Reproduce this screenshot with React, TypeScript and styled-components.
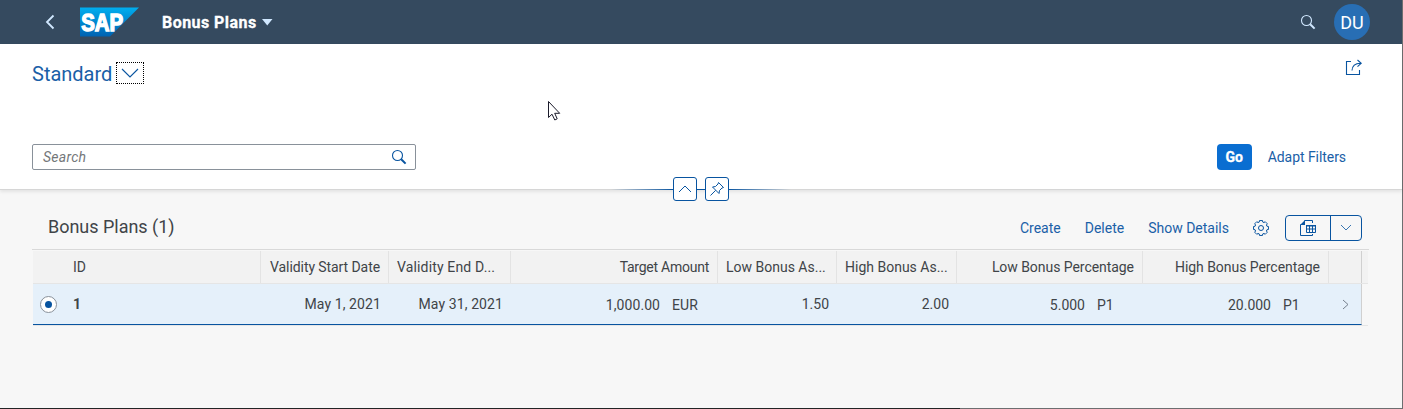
import React from 'react';
import styled, { createGlobalStyle } from 'styled-components';

const Global = createGlobalStyle`
  * { box-sizing: border-box; }
  body { margin: 0; overflow: hidden; background: #f7f7f7; font-family: Roboto, "Liberation Sans", sans-serif; font-size: 14px; color: #404448; }
  svg { display: block; flex: none; }
`;
const Page = styled.div`
  width: 1403px; height: 409px; display: flex; flex-direction: column;
  background: #f7f7f7; border-right: 1px solid #6d6e70;
`;
const Shell = styled.header`
  height: 44px; flex: none; display: flex; align-items: center; background: #354a5f; color: #fff;
  padding: 0 32px 0 44px;
`;
const Back = styled.div`width: 36px;`;
const ShellTitle = styled.div`
  margin-left: 22px; font-weight: 700; font-size: 16px; letter-spacing: 0.45px; white-space: nowrap;
  -webkit-text-stroke: 0.3px #fff;
`;
const TitleArrow = styled.svg`margin-left: 5px;`;
const Spacer = styled.div`flex: 1;`;
const Avatar = styled.div`
  width: 36px; height: 36px; margin-left: 18px; border-radius: 50%; background: #286eb4;
  display: flex; align-items: center; justify-content: center; font-size: 18px;
`;
const FilterHeader = styled.section`
  height: 146px; flex: none; background: #fff; border-bottom: 1px solid #d6d6d6;
  box-shadow: 0 2px 3px rgba(0,0,0,0.08); display: flex; flex-direction: column; position: relative;
`;
const VariantRow = styled.div`
  height: 100px; padding: 14px 39px 0 32px; display: flex; align-items: flex-start; justify-content: space-between;
`;
const Variant = styled.div`
  display: flex; align-items: center; color: #1a60a7; font-size: 20px; line-height: 32px;
`;
const VariantButton = styled.div`
  width: 28px; height: 22px; margin: 0 0 2px 4px; border: 1px dotted #000;
  display: flex; align-items: center; justify-content: center;
`;
const Share = styled.div`padding-top: 1px;`;
const FilterRow = styled.div`height: 26px; display: flex; align-items: center; padding: 0 56px 0 32px;`;
const SearchField = styled.div`
  width: 384px; height: 26px; border: 1px solid #89919a; border-radius: 2px; padding: 0 8px 0 10px;
  display: flex; align-items: center; justify-content: space-between;
  font-style: italic; color: #74777a; letter-spacing: 0.25px;
`;
const GoButton = styled.div`
  width: 35px; height: 26px; border-radius: 4px; background: #0a6ed1; color: #fff; font-weight: 700;
  display: flex; align-items: center; justify-content: center; -webkit-text-stroke: 0.3px #fff;
`;
const Link = styled.div<{ $space?: number; $gap?: number }>`
  color: #1a60a7; white-space: nowrap; letter-spacing: ${p => p.$space ?? 0}px; margin-left: ${p => p.$gap ?? 0}px;
`;
const Pins = styled.div`
  position: absolute; left: 611px; bottom: -13px; width: 180px; height: 26px;
  display: flex; align-items: center; justify-content: center; gap: 8px;
  background: linear-gradient(90deg, rgba(8,84,160,0), #0854a0 35%, #0854a0 65%, rgba(8,84,160,0)) 0 13px / 100% 1px no-repeat;
`;
const PinButton = styled.div`
  width: 24px; height: 24px; border: 1px solid #0854a0; border-radius: 3px; background: #fff;
  display: flex; align-items: center; justify-content: center;
`;
const Cursor = styled.svg`position: absolute; left: 547px; top: 56px;`;
const Toolbar = styled.div`
  height: 59px; padding: 16px 40px 0 48px; display: flex; align-items: center; flex: none;
`;
const Heading = styled.div`font-size: 18px; letter-spacing: -0.02px; padding-bottom: 3px;`;
const Settings = styled.div`margin-left: 24px;`;
const Split = styled.div`
  width: 77px; height: 26px; margin-left: 16px; border: 1px solid #0854a0; border-radius: 4px;
  display: grid; grid-template-columns: 44px 1fr;
`;
const SplitPart = styled.div<{ $line?: boolean }>`
  display: flex; align-items: center; justify-content: center; border-left: ${p => (p.$line ? '1px solid #0854a0' : '0')};
`;
const Table = styled.div`margin: 0 33px 0 32px; border-top: 1px solid #d9d9d9; padding: 1px 1px 0 1px;`;
const columns = '228px 128px 122px 207px 119px 120px 186px 186px 33px 7px';
const HeadRow = styled.div`
  display: grid; grid-template-columns: ${columns}; height: 33px; background: #f2f2f2; border-bottom: 1px solid #e5e5e5;
`;
const HeadCell = styled.div<{ $align?: string; $space?: number; $last?: boolean }>`
  display: flex; align-items: center; padding: 0 8px; white-space: nowrap; overflow: hidden;
  justify-content: ${p => p.$align ?? 'flex-end'}; letter-spacing: ${p => p.$space ?? 0}px;
  border-right: 1px solid ${p => (p.$last ? '#d0d0d0' : '#e3e3e3')};
`;
const IdHead = styled(HeadCell)`padding-left: 40px;`;
const BodyRow = styled.div`
  display: grid; grid-template-columns: ${columns}; height: 42px; border-bottom: 1px solid #e5e5e5;
`;
const Cell = styled.div<{ $space?: number; $align?: string }>`
  background: #e5f0fa; border-bottom: 1px solid #0854a0; padding: 0 8px 0 0; white-space: nowrap;
  display: flex; align-items: center; justify-content: ${p => p.$align ?? 'flex-end'};
  letter-spacing: ${p => p.$space ?? 0}px;
`;
const AmountCell = styled(Cell)`padding: 2px 8px 0 0;`;
const IdCell = styled(Cell)`font-weight: 700; padding-left: 7px;`;
const EndCell = styled(Cell)`padding: 0; border-right: 1px solid #d0d0d0;`;
const Radio = styled.div`
  width: 17px; height: 17px; border: 1px solid #89919a; border-radius: 50%; background: #fff; margin-right: 16px;
  display: flex; align-items: center; justify-content: center;
  &::after { content: ''; width: 7px; height: 7px; border-radius: 50%; background: #0854a0; }
`;
const Unit = styled.span`width: 38px; margin-left: 12px;`;
const BottomEdge = styled.div`
  height: 1px; flex: none; background: linear-gradient(90deg, #222426 960px, #6d6e70 960px);
`;

const Magnifier = ({ color }: { color: string }) => (
  <svg width="16" height="16" viewBox="0 0 16 16" fill="none" stroke={color}>
    <circle cx="6.5" cy="6.5" r="5" strokeWidth="1.1" />
    <path d="M10.2 10.2 14.6 14.6" strokeWidth="2" />
  </svg>
);
const Gear = () => {
  const pts: string[] = [];
  for (let i = 0; i < 8; i++) {
    [[-0.28, 6.2], [-0.2, 7.6], [0.2, 7.6], [0.28, 6.2]].forEach(([d, r]) => {
      const a = (i * Math.PI) / 4 + d;
      pts.push(`${(8 + r * Math.sin(a)).toFixed(2)},${(8 - r * Math.cos(a)).toFixed(2)}`);
    });
  }
  return (
    <svg width="16" height="16" viewBox="0 0 16 16" fill="none" stroke="#0854a0" overflow="visible">
      <polygon points={pts.join(' ')} strokeLinejoin="round" />
      <circle cx="8" cy="8" r="2.5" />
    </svg>
  );
};
const Logo = () => (
  <svg width="60" height="30" viewBox="0 0 60 30">
    <defs>
      <linearGradient id="logo" x1="0" y1="0" x2="0" y2="1">
        <stop offset="0" stopColor="#00aeef" /><stop offset="1" stopColor="#0062b1" />
      </linearGradient>
    </defs>
    <path d="M0 .5H59L30 29.5H0Z" fill="url(#logo)" />
    <text x="1.2" y="23.5" fontFamily="Liberation Sans, sans-serif" fontWeight="700" fontSize="23" textLength="42" lengthAdjust="spacingAndGlyphs" fill="#fff" stroke="#fff" strokeWidth="1.4">SAP</text>
  </svg>
);

export default function App() {
  return (
    <Page>
      <Global />
      <Shell>
        <Back><svg width="12" height="16" viewBox="0 0 12 16" fill="none" stroke="#d1e8ff" strokeWidth="1.8"><path d="M9.5 1.5 3 8l6.500 6.500" /></svg></Back>
        <Logo />
        <ShellTitle>Bonus Plans</ShellTitle>
        <TitleArrow width="11" height="7"><path d="M0 0H10.500L5.250 6.500Z" fill="#d1e8ff" /></TitleArrow>
        <Spacer />
        <Magnifier color="#d1e8ff" />
        <Avatar>DU</Avatar>
      </Shell>
      <FilterHeader>
        <VariantRow>
          <Variant>
            Standard
            <VariantButton><svg width="18" height="10" fill="none" stroke="#0854a0" strokeWidth="1.1"><path d="M1 1 9 9l8-8" /></svg></VariantButton>
          </Variant>
          <Share>
            <svg width="18" height="18" viewBox="0 0 18 18" fill="none" stroke="#0854a0" strokeWidth="1.1">
              <path d="M6 2.500H1.500V15.500H14.500V11" /><path d="M7 11.500C7.200 7 9.500 4.500 15.500 4.300M12.500 1l3.700 3.300-3.700 3.400" />
            </svg>
          </Share>
        </VariantRow>
        <FilterRow>
          <SearchField>Search<Magnifier color="#0854a0" /></SearchField>
          <Spacer />
          <GoButton>Go</GoButton>
          <Link $gap={16} $space={-0.06}>Adapt Filters</Link>
        </FilterRow>
        <Cursor width="16" height="22" viewBox="0 0 16 22"><path d="M1.500 1.500V17.500L5 14.200 7.800 20 10.200 18.800 7.700 13.300H12.700Z" fill="#fff" stroke="#1b1b2b" /></Cursor>
        <Pins>
          <PinButton><svg width="14" height="8" fill="none" stroke="#0854a0"><path d="M1 7 7 1l6 6" /></svg></PinButton>
          <PinButton>
            <svg width="16" height="16" viewBox="0 0 16 16" fill="none" stroke="#0854a0" strokeLinejoin="round"><path d="M9.500 1.500 14.500 6.500 13 7 10.500 9.500 10 12.500 3.500 6 6.500 5.500 9 3ZM6.700 9.300 1.500 14.500" /></svg>
          </PinButton>
        </Pins>
      </FilterHeader>
      <Toolbar>
        <Heading>Bonus Plans (1)</Heading>
        <Spacer />
        <Link>Create</Link>
        <Link $gap={24}>Delete</Link>
        <Link $gap={24}>Show Details</Link>
        <Settings><Gear /></Settings>
        <Split>
          <SplitPart>
            <svg width="16" height="16" viewBox="0 0 16 16" fill="none" stroke="#0854a0"><path d="M9 .5H12.500V3M4.500.5H9M.5 4.500V15.500H12.500V14M6.500 5.500H15.500V12.500H6.500ZM6.500 9H15.500M9.500 5.500V12.500M12.500 5.500V12.500" /><path d="M0 5 5 0V5ZM6 5H16V6.500H6Z" fill="#0854a0" stroke="none" /></svg>
          </SplitPart>
          <SplitPart $line><svg width="12" height="7" fill="none" stroke="#0854a0" strokeWidth=".8"><path d="M1 1l5 5 5-5" /></svg></SplitPart>
        </Split>
      </Toolbar>
      <Table>
        <HeadRow>
          <IdHead $align="flex-start">ID</IdHead>
          <HeadCell $space={-0.08}>Validity Start Date</HeadCell>
          <HeadCell $align="flex-start" $space={0.15}>Validity End D...</HeadCell>
          <HeadCell $space={-0.25}>Target Amount</HeadCell>
          <HeadCell $align="flex-start">Low Bonus As...</HeadCell>
          <HeadCell $align="flex-start">High Bonus As...</HeadCell>
          <HeadCell $space={-0.05}>Low Bonus Percentage</HeadCell>
          <HeadCell $space={-0.05}>High Bonus Percentage</HeadCell>
          <HeadCell $last />
        </HeadRow>
        <BodyRow>
          <IdCell $align="flex-start"><Radio />1</IdCell>
          <Cell $space={0.1}>May 1, 2021</Cell>
          <Cell $space={0.1}>May 31, 2021</Cell>
          <AmountCell $space={0.06}>1,000.00<Unit>EUR</Unit></AmountCell>
          <Cell>1.50</Cell>
          <Cell>2.00</Cell>
          <AmountCell>5.000<Unit>P1</Unit></AmountCell>
          <AmountCell>20.000<Unit>P1</Unit></AmountCell>
          <EndCell $align="center"><svg width="7" height="11" fill="none" stroke="#6a7480" strokeWidth=".9"><path d="M1 1l5 4.500-5 4.500" /></svg></EndCell>
        </BodyRow>
      </Table>
      <Spacer />
      <BottomEdge />
    </Page>
  );
}
